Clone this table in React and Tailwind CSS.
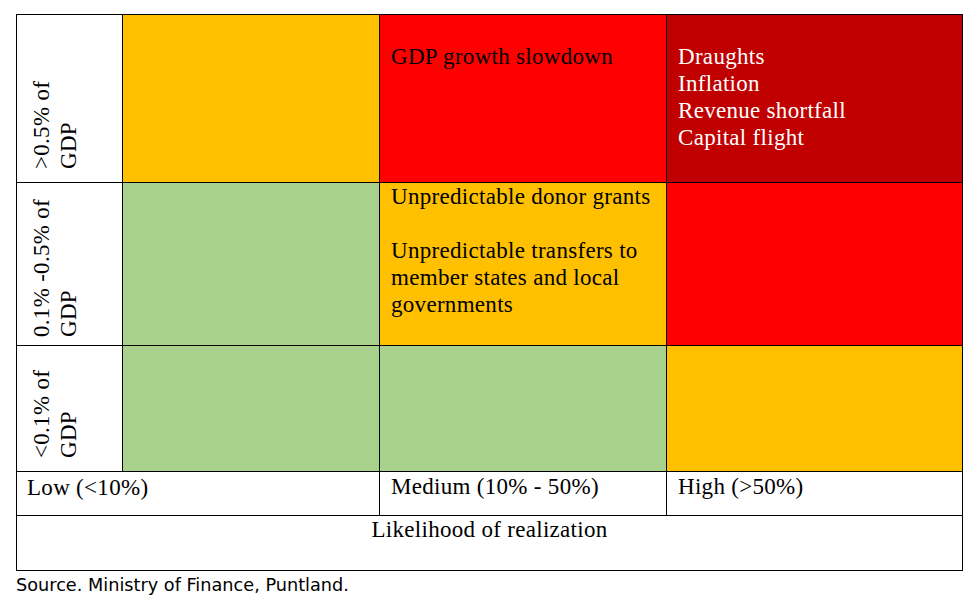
const serif = { fontFamily: '"Liberation Serif", "Times New Roman", serif' }

function SideLabel({ lines, pad }) {
  return (
    <div className="border-r border-b border-black bg-white">
      <div className={`h-full rotate-180 pr-[11px] text-[23px] leading-[27px] tracking-[0.3px] text-black [writing-mode:vertical-rl] ${pad}`}>
        {lines.map((l) => (
          <div key={l}>{l}</div>
        ))}
      </div>
    </div>
  )
}

function Cell({ tone, className = '', children }) {
  return (
    <div className={`border-r border-b border-black px-[11px] text-[23px] leading-[27px] tracking-[0.3px] ${tone} ${className}`}>
      {children}
    </div>
  )
}

export default function App() {
  return (
    <div className="h-[608px] w-[979px] bg-white pt-[14px] pl-[16px]">
      <div
        style={serif}
        className="grid w-[947px] grid-cols-[106px_257px_287px_296px] grid-rows-[168px_163px_126px_44px_55px] border-t border-l border-black"
      >
        <SideLabel lines={['>0.5% of', 'GDP']} pad="pt-[13px]" />
        <Cell tone="bg-[#ffc000]" />
        <Cell tone="bg-[#ff0000] text-black" className="pt-[28px]">
          GDP growth slowdown
        </Cell>
        <Cell tone="bg-[#c00000] text-white" className="pt-[28px]">
          <div>Draughts</div>
          <div>Inflation</div>
          <div>Revenue shortfall</div>
          <div>Capital flight</div>
        </Cell>

        <SideLabel lines={['0.1% -0.5% of', 'GDP']} pad="pt-[8px]" />
        <Cell tone="bg-[#a9d18e]" />
        <Cell tone="bg-[#ffc000] text-black">
          <p>Unpredictable donor grants</p>
          <p className="mt-[27px]">Unpredictable transfers to member states and local governments</p>
        </Cell>
        <Cell tone="bg-[#ff0000]" />

        <SideLabel lines={['<0.1% of', 'GDP']} pad="pt-[13px]" />
        <Cell tone="bg-[#a9d18e]" />
        <Cell tone="bg-[#a9d18e]" />
        <Cell tone="bg-[#ffc000]" />

        <Cell tone="bg-white text-black" className="col-span-2 !pl-[10px] pt-[2px]">
          Low (&lt;10%)
        </Cell>
        <Cell tone="bg-white text-black" className="pt-[1px]">
          Medium (10% - 50%)
        </Cell>
        <Cell tone="bg-white text-black" className="pt-[1px]">
          High (&gt;50%)
        </Cell>

        <Cell tone="bg-white text-black" className="col-span-4 text-center">
          Likelihood of realization
        </Cell>
      </div>
      <p
        className="mt-[3px] text-[17.7px] leading-[22px] text-black"
        style={{ fontFamily: '"DejaVu Sans", Verdana, sans-serif' }}
      >
        Source. Ministry of Finance, Puntland.
      </p>
    </div>
  )
}
